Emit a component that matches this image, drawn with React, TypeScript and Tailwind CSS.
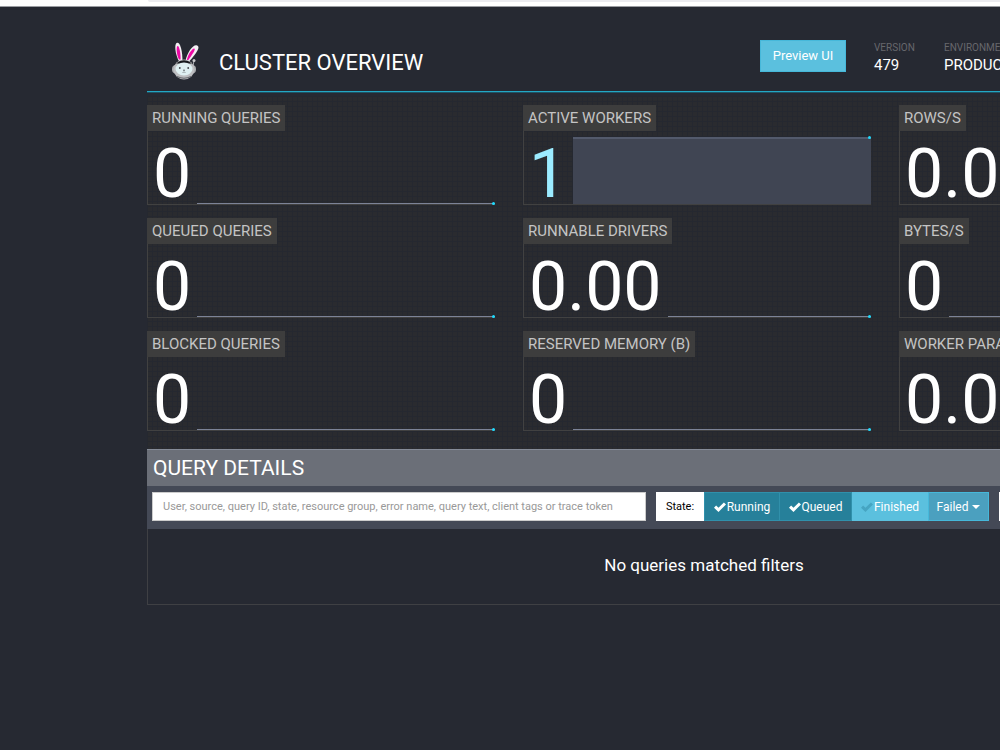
import type { ReactNode } from "react";

type Metric = { label: string; value: string; filled?: boolean };

const metrics: Metric[] = [
  { label: "RUNNING QUERIES", value: "0" },
  { label: "ACTIVE WORKERS", value: "1", filled: true },
  { label: "ROWS/S", value: "0.00" },
  { label: "QUEUED QUERIES", value: "0" },
  { label: "RUNNABLE DRIVERS", value: "0.00" },
  { label: "BYTES/S", value: "0" },
  { label: "BLOCKED QUERIES", value: "0" },
  { label: "RESERVED MEMORY (B)", value: "0" },
  { label: "WORKER PARALLELISM", value: "0.00" },
];

function Logo() {
  return (
    <svg viewBox="0 0 28 40" className="h-10 w-7" aria-hidden="true">
      <path d="M8.500 20C4 13 3 1.500 6 0.800s5.500 7 5.500 19z" fill="#f4eff4" />
      <path d="M8 17.500C5.600 13 4.900 5 6.500 4s3.300 7 3.100 13.500z" fill="#ec0aa5" />
      <path d="M14.500 19C16 11 22 2 26 3.500s-1 8-7.500 15.500z" fill="#f4eff4" />
      <path d="M15.800 18C17 12 21.500 6 23.300 6.500s-2 6-6 11.500z" fill="#ec0aa5" />
      <path d="M22 25l1-7" stroke="#a8aaaf" strokeWidth="1" />
      <circle cx="23" cy="18.500" r="1.500" fill="#c9cacd" />
      <rect x="1" y="23" width="24" height="8.500" rx="4" fill="#a9abae" />
      <ellipse cx="13" cy="27.500" rx="10.500" ry="10" fill="#bdbec1" />
      <path d="M5 21.500q8-6.500 16 0z" fill="#17191d" />
      <ellipse cx="13" cy="27" rx="8.500" ry="6.500" fill="#dff0f2" />
      <circle cx="8.800" cy="26" r=".9" fill="#43474d" />
      <circle cx="17.200" cy="26" r=".9" fill="#43474d" />
      <path d="M12 28h2l-1 1zM11.500 30.500q1.500-1 3 0" fill="none" stroke="#666b70" strokeWidth=".6" />
      <path d="M6 34.500q7 3.500 14 0" fill="none" stroke="#66686d" strokeWidth="1.200" />
    </svg>
  );
}

function Check({ faded = false }: { faded?: boolean }) {
  return (
    <svg viewBox="0 0 12 10" className={faded ? "h-[10px] w-3 text-[#46a5c2]" : "h-[10px] w-3 text-white"} aria-hidden="true">
      <path d="M0 5.800 2.100 3.600l2.400 2.200L9.900 0.400l2.100 2-7.500 7.500z" fill="currentColor" />
    </svg>
  );
}

function MetricCard({ label, value, filled }: Metric) {
  return (
    <div className="flex h-[100px] flex-col border-b border-l border-[#414141]">
      <h2 className="-ml-px self-start bg-[#3d3d3d] px-[5px] text-[15px] leading-[26px] text-[#c4c4c4]">{label}</h2>
      <div className="flex min-h-0 flex-1 items-end gap-[6px] pl-[5px]">
        <span className={filled ? "text-[68px] leading-[60px] text-[#9bebff]" : "text-[68px] leading-[60px] text-white"}>{value}</span>
        <div
          className={
            filled
              ? "relative h-[67px] flex-1 border-t-2 border-[#535a6c] bg-[#404553]"
              : "relative h-px flex-1 bg-[#7c8397]"
          }
        >
          <span className={filled ? "absolute -top-[3px] right-0 size-[3px] rounded-full bg-[#1edcff]" : "absolute -top-px right-0 size-[3px] rounded-full bg-[#1edcff]"} />
        </div>
      </div>
    </div>
  );
}

function Info({ label, children }: { label: string; children: ReactNode }) {
  return (
    <div>
      <div className="text-[10px] leading-[15px] text-[#66676c]">{label}</div>
      <div className="text-[15px] leading-5 text-white">{children}</div>
    </div>
  );
}

export default function App() {
  return (
    <div className="min-h-screen overflow-x-hidden bg-[#262932] font-[Roboto,sans-serif] text-white">
      <div className="h-[7px] border-b border-[#9a9ca1] bg-white">
        <div className="ml-[148px] h-[2px] rounded-bl bg-[#ececf0]" />
      </div>
      <div className="ml-[147px] min-w-[1114px]">
        <header className="flex h-[85px] items-start border-b border-b-[#22a7c4] pt-[33px] shadow-[0_1px_0_#1f5363]">
          <a href="#overview" className="flex items-start pl-6">
            <span className="pt-[2px]">
              <Logo />
            </span>
            <h1 className="pl-5 text-[22px] leading-[46px]">CLUSTER OVERVIEW</h1>
          </a>
          <div className="ml-auto flex w-[501px] items-start">
            <button type="button" className="h-8 w-[86px] border border-[#46b8da] bg-[#5bc0de] text-[13px]">
              Preview UI
            </button>
            <div className="grid grid-cols-[70px_110px_1fr] pl-7">
              <Info label="VERSION">479</Info>
              <Info label="ENVIRONMENT">PRODUCTION</Info>
              <Info label="UPTIME">1.00h</Info>
            </div>
          </div>
        </header>

        <section className="mt-1 bg-[#2a2b2f] bg-[linear-gradient(#252830_1px,transparent_1px),linear-gradient(90deg,#252830_1px,transparent_1px)] bg-[size:5px_5px] pt-[9px] pb-[18px]">
          <div className="mr-[14px] grid grid-cols-3 gap-x-7 gap-y-[13px]">
            {metrics.map((m) => (
              <MetricCard key={m.label} {...m} />
            ))}
          </div>
        </section>

        <section>
          <h2 className="border-t border-[#858b98] bg-[#6b6f78] pl-[6px] text-[21px] leading-[36px]">QUERY DETAILS</h2>
          <div className="flex h-[43px] items-start gap-[10px] bg-[#444956] pt-[6px] pl-[5px]">
            <input
              type="text"
              aria-label="Filter queries"
              placeholder="User, source, query ID, state, resource group, error name, query text, client tags or trace token"
              className="h-[29px] w-[494px] border border-[#ccc] bg-white px-[10px] text-[11px] text-[#333] placeholder:text-[#999]"
            />
            <div className="flex text-xs text-white">
              <span className="h-[29px] w-12 bg-white text-center text-[11px] leading-[29px] text-black">State:</span>
              <button type="button" className="flex h-[29px] w-[76px] items-center justify-center gap-px border border-[#3090ab] bg-[#26809a]">
                <Check />
                Running
              </button>
              <button type="button" className="flex h-[29px] w-[72px] items-center justify-center gap-px border border-l-0 border-[#3090ab] bg-[#26809a]">
                <Check />
                Queued
              </button>
              <button type="button" className="flex h-[29px] w-[76px] items-center justify-center gap-px bg-[#5bc0de]">
                <Check faded />
                Finished
              </button>
              <button type="button" className="flex h-[29px] w-[61px] items-center justify-center gap-1 border border-[#46b8da] bg-[#4ba0bf]">
                Failed
                <svg viewBox="0 0 8 4" className="h-1 w-2" aria-hidden="true">
                  <path d="M0 0h8L4 4z" fill="currentColor" />
                </svg>
              </button>
            </div>
            <span className="h-[29px] w-12 bg-white text-center text-[11px] leading-[29px] text-black">Sort:</span>
          </div>
          <p className="border border-t-0 border-[#3f4044] pt-6 pb-[27px] text-center text-[17px] leading-6">No queries matched filters</p>
        </section>
      </div>
    </div>
  );
}
